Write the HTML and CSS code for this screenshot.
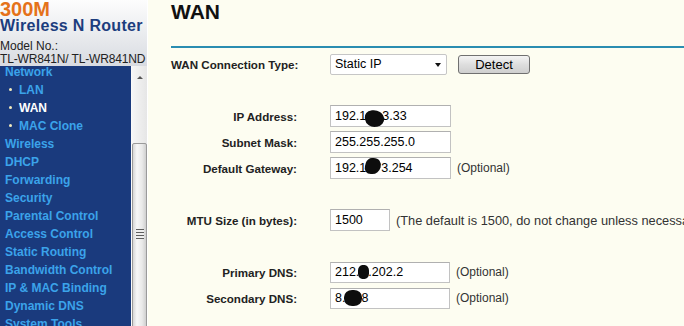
FILE: index.html
```
<!DOCTYPE html>
<html lang="en">
<head>
	<meta charset="UTF-8">
	<title>WAN</title>
	<link rel="stylesheet" href="styles.css">
</head>
<body>
	<div class="page">
		<div class="side">
			<div class="brand">
				<div class="brand-speed">300M</div>
				<div class="brand-name">Wireless N Router</div>
				<div class="brand-model first">Model No.:</div>
				<div class="brand-model tight">TL-WR841N/ TL-WR841ND</div>
			</div>
			<div class="menu-frame">
				<ul class="menu">
					<li>Network</li>
					<li class="sub">LAN</li>
					<li class="sub on">WAN</li>
					<li class="sub">MAC Clone</li>
					<li>Wireless</li>
					<li>DHCP</li>
					<li>Forwarding</li>
					<li>Security</li>
					<li>Parental Control</li>
					<li>Access Control</li>
					<li>Static Routing</li>
					<li>Bandwidth Control</li>
					<li>IP &amp; MAC Binding</li>
					<li>Dynamic DNS</li>
					<li>System Tools</li>
				</ul>
				<div class="scroll">
					<span class="scroll-up"></span>
					<div class="thumb"><span class="grip"></span></div>
				</div>
			</div>
		</div>
		<div class="main">
			<h1>WAN</h1>
			<div class="rule"></div>
			<div class="form">
				<div class="row">
					<label>WAN Connection Type:</label>
					<div class="select-wrap">
						<select><option>Static IP</option></select>
						<span class="caret"></span>
					</div>
					<button class="btn">Detect</button>
				</div>
				<div class="row skip">
					<label>IP Address:</label>
					<span class="field">192.1<i class="ink ink-ip"></i>3.33</span>
				</div>
				<div class="row">
					<label>Subnet Mask:</label>
					<span class="field">255.255.255.0</span>
				</div>
				<div class="row">
					<label>Default Gateway:</label>
					<span class="field">192.1<i class="ink ink-gw"></i>3.254</span>
					<span class="note">(Optional)</span>
				</div>
				<div class="row skip">
					<label>MTU Size (in bytes):</label>
					<span class="field short">1500</span>
					<span class="note wide">(The default is 1500, do not change unless necessary.)</span>
				</div>
				<div class="row skip">
					<label>Primary DNS:</label>
					<span class="field dns">212.<i class="ink ink-p"></i>.202.2</span>
					<span class="note">(Optional)</span>
				</div>
				<div class="row">
					<label>Secondary DNS:</label>
					<span class="field dns">8.<i class="ink ink-s"></i>8</span>
					<span class="note">(Optional)</span>
				</div>
			</div>
		</div>
	</div>
</body>
</html>
```
FILE: styles.css
```
*{margin:0;padding:0;list-style:none;box-sizing:border-box;}
body{overflow:hidden;font-family:"Liberation Sans",Arial,sans-serif;background:#fdfdf1;}
.page{display:flex;height:326px;width:684px;overflow:hidden;}

/* left frame */
.side{width:148px;flex:none;display:flex;flex-direction:column;border-right:1px solid #fff;}
.brand{height:66px;overflow:hidden;background:linear-gradient(#fdfdfd,#d8dbe1);white-space:nowrap;}
.brand-speed{font-size:20px;line-height:19px;font-weight:bold;color:#e5721a;}
.brand-name{font-size:16px;line-height:14px;font-weight:bold;color:#1c3d7e;letter-spacing:0.3px;}
.brand-model{font-size:12px;line-height:13px;color:#222;}
.brand-model.first{margin-top:7px;}
.brand-model.tight{letter-spacing:-0.15px;}
.menu-frame{flex:1;display:flex;overflow:hidden;}
.menu{width:131px;flex:none;background:#1a3a7d;}
.menu li{font-size:12px;line-height:18px;font-weight:bold;color:#3ba3ea;padding-left:5px;white-space:nowrap;}
.menu li:first-child{margin-top:-3px;}
.menu li.sub:before{content:"";display:inline-block;width:3px;height:3px;border-radius:50%;background:#f3ebbd;margin:0 7px 0 4px;vertical-align:3px;}
.menu li.on{color:#fff;}
.scroll{width:16px;flex:none;background:linear-gradient(90deg,#f6f6f6,#e6e6e6);border-left:1px solid #fafafa;display:flex;flex-direction:column;align-items:center;}
.scroll-up{margin-top:10px;width:0;height:0;border-left:3px solid transparent;border-right:3px solid transparent;border-bottom:3px solid #555;}
.thumb{margin-top:64px;width:15px;height:220px;flex:none;border:1px solid #9a9a9a;border-radius:2px;background:linear-gradient(90deg,#d6d6d6,#f7f7f7 30%,#e9e9e9 70%,#cfcfcf);}
.grip{display:block;width:8px;height:10px;margin:85px auto 0;background:repeating-linear-gradient(#5e5e5e 0 1px,#eee 1px 3px);}

/* content */
.main{flex:1;padding-left:23px;overflow:hidden;}
h1{font-size:21px;line-height:24px;font-weight:bold;color:#111;}
.rule{height:2px;background:#2a8db1;margin-top:22px;}
.form{padding-top:3px;}
.row{display:flex;align-items:center;height:26px;white-space:nowrap;}
.row.skip{margin-top:26px;}
.row label{width:126px;flex:none;margin-right:33px;text-align:right;font-size:11.6px;font-weight:bold;color:#222;}
.select-wrap{position:relative;width:117px;height:21px;flex:none;}
.select-wrap select{appearance:none;-webkit-appearance:none;width:100%;height:100%;border:1px solid #c6c6c6;border-radius:2px;background:#fff;padding-left:4px;font-family:inherit;font-size:12.5px;color:#000;}
.caret{position:absolute;right:6px;top:9px;border-left:3px solid transparent;border-right:3px solid transparent;border-top:4px solid #111;}
.btn{margin-left:11px;width:72px;height:19px;flex:none;border:1px solid #707070;border-radius:3px;background:linear-gradient(#f4f4f4,#dedede 50%,#cfcfcf);font-family:inherit;font-size:13px;color:#000;line-height:17px;}
.field{display:flex;align-items:center;width:121px;height:22px;flex:none;border:1px solid #c2c2c2;border-top-color:#b0b0b0;background:#fff;padding-left:4px;font-size:12.5px;color:#000;}
.field.dns{width:120px;height:21px;}
.field.short{width:60px;}
.note{margin-left:6px;font-size:12px;color:#333;}
.note.wide{font-size:12.8px;}
.ink{display:inline-block;background:#0d0d0d;flex:none;}
.ink-ip{width:19px;height:17px;border-radius:40% 60% 45% 55%;margin:4px -2px 0 -1px;transform:rotate(-8deg);}
.ink-gw{width:16px;height:16px;border-radius:30% 60% 40% 50%;margin:-4px 0 0 -1px;transform:skewX(-15deg);}
.ink-p{width:11px;height:14px;border-radius:40%;margin:0 -1px;}
.ink-s{width:18px;height:16px;border-radius:45%;margin:0 -1px 0 -1px;}
```
